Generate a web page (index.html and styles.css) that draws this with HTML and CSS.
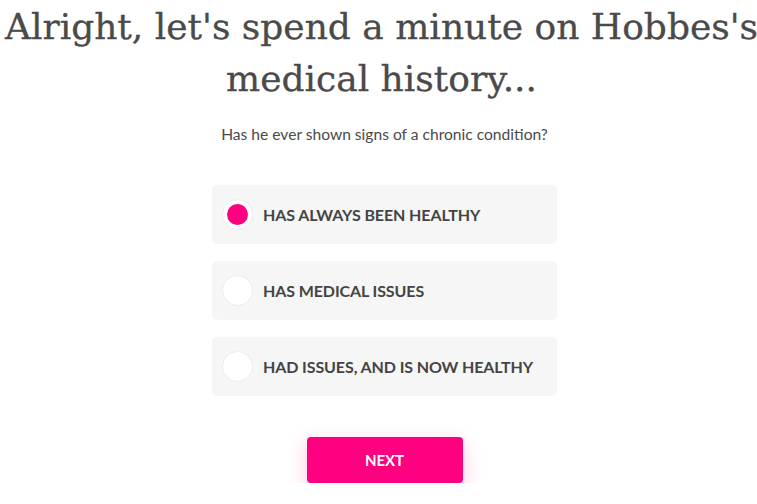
FILE: index.html
```html
<!DOCTYPE html>
<html>
<head>
<meta charset="utf-8">
<link rel="stylesheet" href="styles.css">
</head>
<body>
<main class="page">
  <h1 class="title">Alright, let's spend a minute on Hobbes's medical history...</h1>
  <p class="question">Has he ever shown signs of a chronic condition?</p>
  <div class="options">
    <label class="option">
      <span class="radio checked"><span class="dot"></span></span>
      <span class="label">HAS ALWAYS BEEN HEALTHY</span>
    </label>
    <label class="option">
      <span class="radio"></span>
      <span class="label">HAS MEDICAL ISSUES</span>
    </label>
    <label class="option">
      <span class="radio"></span>
      <span class="label">HAD ISSUES, AND IS NOW HEALTHY</span>
    </label>
  </div>
  <button class="next">NEXT</button>
</main>
</body>
</html>
```

FILE: styles.css
```css
html, body {
  margin: 0;
  padding: 0;
  background: #ffffff;
  overflow: hidden;
}
.page {
  display: flex;
  flex-direction: column;
  align-items: center;
  width: 745px;
  padding-left: 12px;
}
.title {
  margin: 1px 0 0 -6px;
  font-family: "DejaVu Serif", serif;
  font-weight: normal;
  font-size: 36px;
  line-height: 52px;
  color: #4a4a4a;
  text-align: center;
  width: 757px;
  -webkit-text-stroke: 0.3px #4a4a4a;
}
.question {
  margin: 19px 0 0 0;
  font-family: Lato, "Liberation Sans", sans-serif;
  font-size: 15.6px;
  line-height: 20px;
  color: #4a4a4a;
}
.options {
  margin-top: 41px;
  display: flex;
  flex-direction: column;
  gap: 17px;
}
.option {
  width: 345px;
  height: 59px;
  box-sizing: border-box;
  background: #f6f6f6;
  border-radius: 5px;
  display: flex;
  align-items: center;
  padding-left: 10px;
  gap: 10px;
}
.radio {
  width: 31px;
  height: 31px;
  box-sizing: border-box;
  border-radius: 50%;
  background: #ffffff;
  border: 1px solid #ececec;
  display: flex;
  align-items: center;
  justify-content: center;
}
.dot {
  width: 21px;
  height: 21px;
  border-radius: 50%;
  background: #ff0080;
}
.label {
  font-family: Lato, "Liberation Sans", sans-serif;
  font-weight: bold;
  font-size: 16px;
  color: #444444;
  letter-spacing: -0.1px;
}
.next {
  margin-top: 41px;
  width: 156px;
  height: 46px;
  border: none;
  border-radius: 4px;
  background: #ff0080;
  color: #ffffff;
  font-family: Lato, "Liberation Sans", sans-serif;
  font-weight: bold;
  font-size: 15px;
  box-shadow: 0 6px 20px rgba(255, 0, 128, 0.22);
}
```
